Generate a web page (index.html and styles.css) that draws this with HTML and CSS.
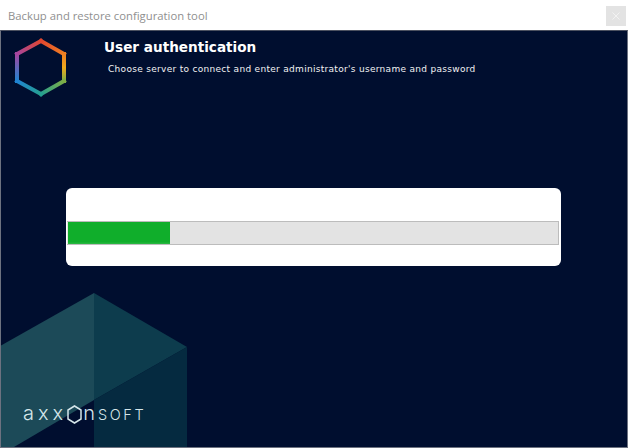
FILE: index.html
```html
<!DOCTYPE html>
<html lang="en">
<head>
    <meta charset="UTF-8">
    <title>Backup and restore configuration tool</title>
    <link rel="stylesheet" href="styles.css">
</head>
<body>
    <div class="titlebar">
        <span class="title">Backup and restore configuration tool</span>
        <span class="close">
            <svg width="8" height="8" viewBox="0 0 8 8"><path d="M0.5 0.5L7.5 7.5M7.5 0.5L0.5 7.5" stroke="#f2f2f2" fill="none"/></svg>
        </span>
    </div>
    <div class="main">
        <svg class="backdrop" width="188" height="156" viewBox="0 0 188 156">
            <polygon points="0,54 94,1 94,108 14,155 0,155" fill="#1c4a58"/>
            <polygon points="94,1 187,55 94,108" fill="#0d3c4d"/>
            <polygon points="94,108 187,55 187,155 94,155" fill="#052a40"/>
        </svg>
        <div class="header">
            <svg class="logo" width="54" height="60" viewBox="0 0 54 60" fill="none" stroke-width="4" stroke-linecap="square">
                <defs>
                    <linearGradient id="e1" gradientUnits="userSpaceOnUse" x1="27" y1="3" x2="50" y2="16"><stop offset="0" stop-color="#e2472f"/><stop offset="1" stop-color="#ef7f22"/></linearGradient>
                    <linearGradient id="e2" gradientUnits="userSpaceOnUse" x1="50" y1="16" x2="50" y2="43"><stop offset="0" stop-color="#ef7f22"/><stop offset=".5" stop-color="#f0a91c"/><stop offset="1" stop-color="#7fae45"/></linearGradient>
                    <linearGradient id="e3" gradientUnits="userSpaceOnUse" x1="50" y1="43" x2="27" y2="56"><stop offset="0" stop-color="#7fae45"/><stop offset="1" stop-color="#26a08f"/></linearGradient>
                    <linearGradient id="e4" gradientUnits="userSpaceOnUse" x1="27" y1="56" x2="3" y2="43"><stop offset="0" stop-color="#26a08f"/><stop offset="1" stop-color="#1f84d2"/></linearGradient>
                    <linearGradient id="e5" gradientUnits="userSpaceOnUse" x1="3" y1="43" x2="3" y2="16"><stop offset="0" stop-color="#1f84d2"/><stop offset="1" stop-color="#a5459f"/></linearGradient>
                    <linearGradient id="e6" gradientUnits="userSpaceOnUse" x1="3" y1="16" x2="27" y2="3"><stop offset="0" stop-color="#a5459f"/><stop offset="1" stop-color="#e2472f"/></linearGradient>
                </defs>
                <path d="M27 3L50 16" stroke="url(#e1)"/>
                <path d="M50 16V43" stroke="url(#e2)"/>
                <path d="M50 43L27 56" stroke="url(#e3)"/>
                <path d="M27 56L3 43" stroke="url(#e4)"/>
                <path d="M3 43V16" stroke="url(#e5)"/>
                <path d="M3 16L27 3" stroke="url(#e6)"/>
            </svg>
            <div class="heading">
                <h1>User authentication</h1>
                <p>Choose server to connect and enter administrator's username and password</p>
            </div>
        </div>
        <div class="card">
            <div class="progress"><div class="bar" style="width:102px"></div></div>
        </div>
        <div class="brand">
            <span class="brand-low">axx</span>
            <svg class="brand-hex" width="15" height="19" viewBox="0 0 15 19"><polygon points="7.5,1 14,5 14,14 7.5,18 1,14 1,5" fill="none" stroke="#d5e6ea" stroke-width="1.5"/></svg>
            <span class="brand-low">n</span>
            <span class="brand-up">SOFT</span>
        </div>
    </div>
</body>
</html>
```

FILE: styles.css
```css
*{margin:0;padding:0;box-sizing:border-box;}

body{width:628px;height:448px;overflow:hidden;background:#fff;font-family:"Open Sans",sans-serif;}

.titlebar{height:30px;display:flex;align-items:center;justify-content:space-between;padding:0 1px 0 8px;}
.title{font-size:11.3px;color:#8f8f8f;}
.close{width:20px;height:20px;margin:2px 1px 0 0;background:#e3e3e3;display:flex;align-items:center;justify-content:center;}

.main{
    position:relative;
    height:418px;
    background:#000e2f;
    border-top:1px solid #4c5160;
    border-left:1px solid #6d7280;
    border-right:1px solid #6d7280;
    border-bottom:1px solid #6d7280;
    overflow:hidden;
}

.backdrop{position:absolute;left:-1px;bottom:-1px;}

.header{position:relative;display:flex;padding:7px 0 0 13px;height:157px;}
.logo{flex:none;}
.heading{margin-left:36px;}
h1{font-family:"DejaVu Sans",sans-serif;font-size:13.6px;font-weight:bold;color:#fff;line-height:18px;}
p{font-family:"DejaVu Sans",sans-serif;font-size:9px;color:#f2f2f2;margin:7px 0 0 4px;line-height:12px;letter-spacing:.3px;}

.card{
    position:relative;
    width:495px;
    height:78px;
    margin-left:65px;
    background:#fff;
    border-radius:6px;
    padding:33px 2px 0 1px;
}
.progress{height:24px;background:#e3e3e3;border:1px solid #bcbcbc;border-left:0;}
.bar{height:100%;margin-left:1px;background:linear-gradient(#10ae2b 90%,#2cb845);}

.brand{
    position:absolute;
    left:22px;
    bottom:23px;
    display:flex;
    align-items:baseline;
    height:22px;
    font-family:"Inter",sans-serif;
    font-weight:300;
    color:#d5e6ea;
}
.brand-low{font-size:20px;letter-spacing:4px;line-height:22px;}
.brand-up{font-size:14.5px;letter-spacing:2.6px;margin-left:-1px;line-height:22px;}
.brand-hex{flex:none;align-self:flex-start;margin:3px 1px 0 0;}
```
